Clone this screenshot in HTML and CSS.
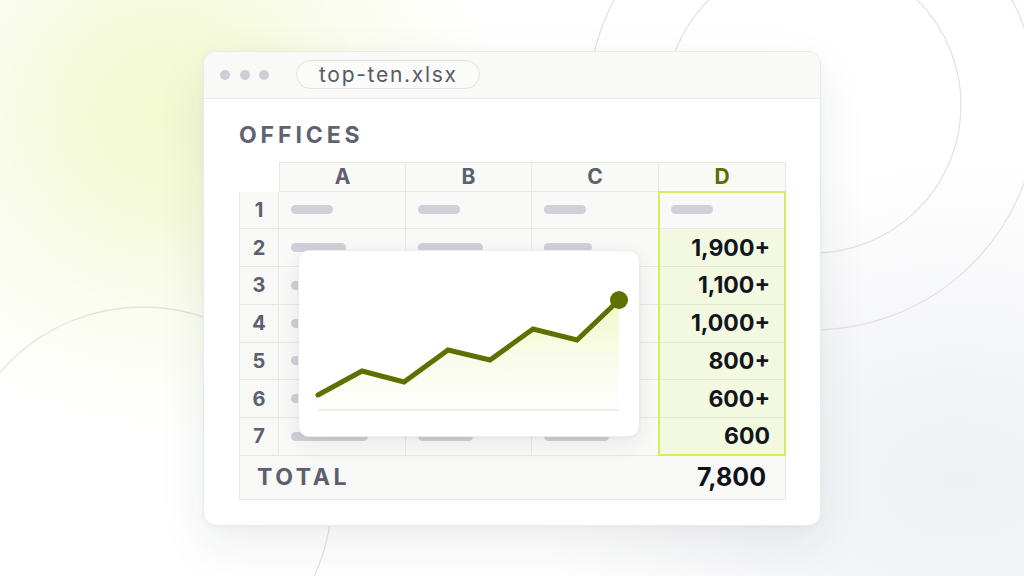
FILE: index.html
```html
<!DOCTYPE html>
<html lang="en">
<head>
<meta charset="utf-8">
<title>top-ten.xlsx</title>
<link rel="stylesheet" href="styles.css">
</head>
<body>
<div class="stage">
  <svg class="bg-circles" width="1024" height="576" viewBox="0 0 1024 576" aria-hidden="true">
    <circle cx="813" cy="105" r="148" />
    <circle cx="813" cy="105" r="225" />
    <circle cx="143" cy="496" r="189" />
  </svg>

  <div class="window">
    <div class="titlebar">
      <div class="dots"><span class="dot"></span><span class="dot"></span><span class="dot"></span></div>
      <div class="file-pill">top-ten.xlsx</div>
    </div>

    <div class="content">
      <h1 class="sheet-title">OFFICES</h1>

      <div class="sheet">
        <div class="corner"></div>
        <div class="colhead first">A</div>
        <div class="colhead">B</div>
        <div class="colhead">C</div>
        <div class="colhead active">D</div>

        <div class="rownum">1</div>
        <div class="cell"><span class="bar w42"></span></div>
        <div class="cell"><span class="bar w42"></span></div>
        <div class="cell"><span class="bar w42"></span></div>
        <div class="cell dcell plain"><span class="bar w42"></span></div>

        <div class="rownum">2</div>
        <div class="cell"><span class="bar w55"></span></div>
        <div class="cell"><span class="bar w65"></span></div>
        <div class="cell"><span class="bar w48"></span></div>
        <div class="cell dcell">1,900+</div>

        <div class="rownum">3</div>
        <div class="cell"><span class="bar w60"></span></div>
        <div class="cell"><span class="bar w48"></span></div>
        <div class="cell"><span class="bar w55"></span></div>
        <div class="cell dcell">1,100+</div>

        <div class="rownum">4</div>
        <div class="cell"><span class="bar w48"></span></div>
        <div class="cell"><span class="bar w65"></span></div>
        <div class="cell"><span class="bar w42"></span></div>
        <div class="cell dcell">1,000+</div>

        <div class="rownum">5</div>
        <div class="cell"><span class="bar w65"></span></div>
        <div class="cell"><span class="bar w42"></span></div>
        <div class="cell"><span class="bar w60"></span></div>
        <div class="cell dcell">800+</div>

        <div class="rownum">6</div>
        <div class="cell"><span class="bar w55"></span></div>
        <div class="cell"><span class="bar w60"></span></div>
        <div class="cell"><span class="bar w48"></span></div>
        <div class="cell dcell">600+</div>

        <div class="rownum">7</div>
        <div class="cell"><span class="bar w76"></span></div>
        <div class="cell"><span class="bar w55"></span></div>
        <div class="cell"><span class="bar w65"></span></div>
        <div class="cell dcell">600</div>

        <div class="total-row">
          <span class="total-label">TOTAL</span>
          <span class="total-value">7,800</span>
        </div>

        <div class="d-highlight"></div>

        <div class="chart-card">
          <svg width="342" height="187" viewBox="0 0 342 187" aria-hidden="true">
            <defs>
              <linearGradient id="area" x1="0" y1="50" x2="0" y2="160" gradientUnits="userSpaceOnUse">
                <stop offset="0" stop-color="#eef8c4" stop-opacity="0.95"/>
                <stop offset="1" stop-color="#f7fbe6" stop-opacity="0.15"/>
              </linearGradient>
            </defs>
            <polygon class="area" points="20,145 64,121 106,132 150,100 192,110 235,79 279,90 321,50 321,160 20,160" />
            <line class="baseline" x1="20" y1="160" x2="321" y2="160" />
            <polyline class="trend" points="20,145 64,121 106,132 150,100 192,110 235,79 279,90 321,50" />
            <circle class="endpoint" cx="321" cy="50" r="9" />
          </svg>
        </div>
      </div>
    </div>
  </div>
</div>
</body>
</html>
```

FILE: styles.css
```css
* { box-sizing: border-box; }

html, body {
  margin: 0;
  padding: 0;
}

body {
  font-family: "Inter", "Liberation Sans", sans-serif;
  color: #5c606e;
}

.stage {
  position: relative;
  width: 1024px;
  height: 576px;
  overflow: hidden;
  display: flex;
  align-items: center;
  justify-content: center;
  background:
    radial-gradient(ellipse 330px 320px at 165px 115px, #f3f9d2 0%, #f5fadb 30%, rgba(248, 252, 232, 0.7) 60%, rgba(255, 255, 255, 0) 100%),
    radial-gradient(ellipse 420px 320px at 960px 480px, #eff0f3 0%, rgba(240, 241, 244, 0.6) 50%, rgba(255, 255, 255, 0) 100%),
    #ffffff;
}

.bg-circles {
  position: absolute;
  left: 0;
  top: 0;
}

.bg-circles circle {
  fill: none;
  stroke: #e3e3e1;
  stroke-width: 1.3;
}

.window {
  position: relative;
  z-index: 1;
  width: 618px;
  height: 475px;
  background: #ffffff;
  border: 1px solid #eaeae8;
  border-radius: 13px;
  overflow: hidden;
  box-shadow: 0 18px 50px rgba(30, 32, 40, 0.08), 0 2px 8px rgba(30, 32, 40, 0.03);
}

.titlebar {
  height: 47px;
  background: #f9f9f8;
  border-bottom: 1px solid #e8e8e6;
  display: flex;
  align-items: center;
  padding-left: 16px;
}

.dots {
  display: flex;
  gap: 9.5px;
}

.dot {
  width: 10px;
  height: 10px;
  border-radius: 50%;
  background: #cdced6;
}

.file-pill {
  margin-left: 27px;
  height: 29px;
  padding: 0 21px 0 22px;
  border: 1px solid #e2e2e0;
  border-radius: 15px;
  background: #fbfbfa;
  display: flex;
  align-items: center;
  font-size: 21px;
  letter-spacing: 1.7px;
  color: #565a68;
}

.content {
  padding: 22px 0 0 35px;
}

.sheet-title {
  margin: 0 0 13px 0;
  font-size: 23px;
  line-height: 28px;
  font-weight: 700;
  letter-spacing: 3.9px;
  color: #5f6371;
}

.sheet {
  position: relative;
  width: 547px;
  display: grid;
  grid-template-columns: 40px 127px 126px 127px 127px;
  grid-template-rows: 30px repeat(7, 37.75px) 44px;
}

.colhead {
  display: flex;
  align-items: center;
  justify-content: center;
  background: #f9f9f8;
  border-top: 1px solid #e7e7e5;
  border-right: 1px solid #e7e7e5;
  border-bottom: 1px solid #e7e7e5;
  font-size: 21px;
  font-weight: 700;
  color: #5c606e;
}

.colhead.first {
  border-left: 1px solid #e7e7e5;
}

.colhead.active {
  color: #5a6f00;
}

.rownum {
  display: flex;
  align-items: center;
  justify-content: center;
  background: #f8f8f7;
  border-left: 1px solid #e7e7e5;
  border-right: 1px solid #e7e7e5;
  border-bottom: 1px solid #e7e7e5;
  font-size: 20px;
  font-weight: 700;
  color: #5c606e;
}

.cell {
  display: flex;
  align-items: center;
  padding-left: 12px;
  background: #f9f9f8;
  border-right: 1px solid #e7e7e5;
  border-bottom: 1px solid #e7e7e5;
}

.bar {
  display: block;
  height: 9px;
  border-radius: 5px;
  background: #cfd0d8;
}

.w42 { width: 42px; }
.w48 { width: 48px; }
.w55 { width: 55px; }
.w60 { width: 60px; }
.w65 { width: 65px; }
.w76 { width: 77px; }

.dcell {
  justify-content: flex-end;
  padding-right: 15px;
  background: #f3f8e1;
  border-bottom-color: #e4e9d2;
  font-size: 23px;
  font-weight: 700;
  color: #13151c;
}

.dcell.plain {
  justify-content: flex-start;
  padding-left: 12px;
  background: #f9f9f8;
  border-bottom-color: #e7e7e5;
}

.d-highlight {
  position: absolute;
  left: 419px;
  top: 29px;
  right: 0;
  bottom: 44px;
  border: 2px solid #d4ee5e;
  pointer-events: none;
  z-index: 2;
}

.total-row {
  grid-column: 1 / -1;
  display: flex;
  align-items: center;
  justify-content: space-between;
  padding: 0 19px 0 17px;
  background: #f8f8f6;
  border-left: 1px solid #e7e7e5;
  border-right: 1px solid #e7e7e5;
  border-bottom: 1px solid #e7e7e5;
}

.total-label {
  font-size: 23px;
  font-weight: 700;
  letter-spacing: 3.6px;
  color: #5c606e;
}

.total-value {
  font-size: 25px;
  font-weight: 700;
  color: #10121a;
}

.chart-card {
  position: absolute;
  left: 59px;
  top: 88px;
  width: 342px;
  height: 187px;
  z-index: 3;
  background: #ffffff;
  border: 1px solid #ededeb;
  border-radius: 11px;
  box-shadow: 0 6px 22px rgba(30, 32, 40, 0.08), 0 1px 3px rgba(30, 32, 40, 0.04);
  overflow: hidden;
}

.chart-card svg {
  display: block;
  margin: -1px 0 0 -1px;
}

.area {
  fill: url(#area);
}

.baseline {
  stroke: #e6e6e4;
  stroke-width: 1.5;
}

.trend {
  fill: none;
  stroke: #5d7100;
  stroke-width: 5;
  stroke-linejoin: miter;
  stroke-linecap: round;
}

.endpoint {
  fill: #5d7100;
}
```
